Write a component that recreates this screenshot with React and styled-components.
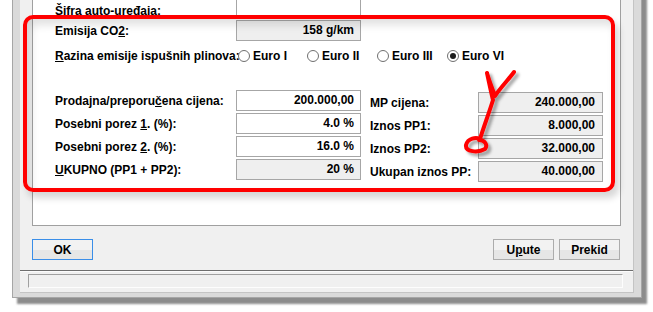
import React from "react";
import styled, { createGlobalStyle } from "styled-components";

const GlobalStyle = createGlobalStyle`
  html, body {
    margin: 0;
    padding: 0;
    background: #ffffff;
  }
  body {
    font-family: "Liberation Sans", Arial, sans-serif;
    font-size: 12px;
    font-weight: bold;
    color: #000;
  }
`;

const Page = styled.div`
  position: relative;
  width: 653px;
  height: 312px;
  overflow: hidden;
  background: #fff;
`;

const Window = styled.div`
  margin: -24px 0 0 12px;
  width: 630px;
  height: 322px;
  box-sizing: border-box;
  border: 1px solid #a6a6a6;
  border-top: none;
  background: #dadada;
  padding: 0 7px 4px 7px;
  box-shadow: 5px 6px 2px rgba(0, 0, 0, 0.45);
  display: flex;
`;

const Body = styled.div`
  flex: 1;
  display: flex;
  flex-direction: column;
  background: #f0f0f0;
  border-right: 1px solid #c4c4c4;
  border-bottom: 1px solid #c4c4c4;
`;

const Panel = styled.div`
  height: 250px;
  margin: 0 12px 0 12px;
  box-sizing: border-box;
  background: #fff;
  border: 1px solid #a0a0a0;
  border-top: none;
  padding: 21px 0 0 22px;
  display: flex;
  flex-direction: column;
`;

const Rows = styled.div`
  display: flex;
  flex-direction: column;
  gap: 2px;
`;

const Row = styled.div`
  display: grid;
  grid-template-columns: ${(p) => p.$label || 181}px 125px;
  align-items: ${(p) => p.$align || "center"};
  height: 21px;
`;

const Label = styled.div`
  white-space: nowrap;
  line-height: 14px;
`;

const U = styled.span`
  text-decoration: underline;
  text-underline-offset: 1px;
`;

const Field = styled.div`
  height: 21px;
  box-sizing: border-box;
  border: 1px solid #a6a6a6;
  background: ${(p) => (p.$readonly ? "#efefef" : "#ffffff")};
  text-align: right;
  padding-right: ${(p) => (p.$pad ? p.$pad : 6)}px;
  line-height: 19px;
  white-space: nowrap;
`;

const RadioRow = styled.div`
  display: grid;
  grid-template-columns: 183px auto;
  align-items: center;
  height: 21px;
  margin-top: 4px;
`;

const RadioGroup = styled.div`
  display: flex;
  align-items: center;
`;

const RadioItem = styled.div`
  display: flex;
  align-items: center;
  gap: 3px;
  width: ${(p) => p.$w}px;
`;

const Circle = styled.span`
  width: 12px;
  height: 12px;
  box-sizing: border-box;
  border-radius: 50%;
  border: 1px solid #6f6f6f;
  background: #fff;
  display: flex;
  align-items: center;
  justify-content: center;
  &::after {
    content: "";
    display: ${(p) => (p.$checked ? "block" : "none")};
    width: 6px;
    height: 6px;
    border-radius: 50%;
    background: #1b1b1b;
  }
`;

const Prices = styled.div`
  display: flex;
  margin-top: 24px;
`;

const Column = styled.div`
  display: flex;
  flex-direction: column;
  gap: 2px;
  margin-left: ${(p) => p.$offset || 0}px;
  padding-top: ${(p) => p.$top || 0}px;
`;

const ButtonBar = styled.div`
  display: flex;
  justify-content: space-between;
  margin: 13px 13px 0 12px;
  height: 21px;
`;

const ButtonGroup = styled.div`
  display: flex;
  gap: 5px;
`;

const Button = styled.div`
  width: 61px;
  height: 21px;
  box-sizing: border-box;
  border: 1px solid ${(p) => (p.$focused ? "#3a8ee8" : "#acacac")};
  background: linear-gradient(#f2f2f2 0 50%, #e6e6e6 50% 100%);
  display: flex;
  align-items: center;
  justify-content: center;
  font-size: 12px;
`;

const Separator = styled.div`
  margin-top: 10px;
  height: 1px;
  background: #6e6e6e;
  border-bottom: 1px solid #fbfbfb;
`;

const StatusField = styled.div`
  margin: 2px 10px 0 8px;
  height: 14px;
  box-sizing: border-box;
  border-top: 1px solid #a0a0a0;
  border-left: 1px solid #a0a0a0;
  border-right: 1px solid #fdfdfd;
  border-bottom: 1px solid #fdfdfd;
`;

const Highlight = styled.div`
  position: absolute;
  left: 23px;
  top: 15px;
  width: 592px;
  height: 177px;
  box-sizing: border-box;
  border: 4px solid #ff0000;
  border-radius: 10px;
  box-shadow: 4px 6px 7px rgba(0, 0, 0, 0.16),
    inset 4px 6px 8px rgba(0, 0, 0, 0.12);
  pointer-events: none;
`;

const Scribble = styled.svg`
  position: absolute;
  left: 0;
  top: 0;
  width: 653px;
  height: 312px;
  pointer-events: none;
`;

const leftRows = [
  { label: <>Prodajna/preporu<U>č</U>ena cijena:</>, value: "200.000,00" },
  { label: <>Posebni porez <U>1</U>. (%):</>, value: "4.0 %" },
  { label: <>Posebni porez <U>2</U>. (%):</>, value: "16.0 %" },
  { label: <><U>U</U>KUPNO (PP1 + PP2):</>, value: "20 %", readonly: true },
];

const rightRows = [
  { label: "MP cijena:", value: "240.000,00" },
  { label: "Iznos PP1:", value: "8.000,00" },
  { label: "Iznos PP2:", value: "32.000,00" },
  { label: "Ukupan iznos PP:", value: "40.000,00" },
];

const radios = [
  { text: "Euro I", w: 69 },
  { text: "Euro II", w: 70 },
  { text: "Euro III", w: 70 },
  { text: "Euro VI", w: 70, checked: true },
];

export default function App() {
  return (
    <>
      <GlobalStyle />
      <Page>
        <Window>
          <Body>
            <Panel>
              <Rows>
                <Row $align="end">
                  <Label>Šifra auto-uređaja:</Label>
                  <Field />
                </Row>
                <Row>
                  <Label>
                    Emisija CO<U>2</U>:
                  </Label>
                  <Field $readonly>158 g/km</Field>
                </Row>
              </Rows>
              <RadioRow>
                <Label>
                  <U>R</U>azina emisije ispušnih plinova:
                </Label>
                <RadioGroup>
                  {radios.map((r) => (
                    <RadioItem key={r.text} $w={r.w}>
                      <Circle $checked={r.checked} />
                      {r.text}
                    </RadioItem>
                  ))}
                </RadioGroup>
              </RadioRow>
              <Prices>
                <Column>
                  {leftRows.map((r, i) => (
                    <Row key={i}>
                      <Label>{r.label}</Label>
                      <Field $readonly={r.readonly}>{r.value}</Field>
                    </Row>
                  ))}
                </Column>
                <Column $offset={9} $top={2}>
                  {rightRows.map((r) => (
                    <Row key={r.label} $label={108}>
                      <Label>{r.label}</Label>
                      <Field $readonly $pad={7}>
                        {r.value}
                      </Field>
                    </Row>
                  ))}
                </Column>
              </Prices>
            </Panel>
            <ButtonBar>
              <Button $focused>OK</Button>
              <ButtonGroup>
                <Button>
                  U<U>p</U>ute
                </Button>
                <Button>Prekid</Button>
              </ButtonGroup>
            </ButtonBar>
            <Separator />
            <StatusField />
          </Body>
        </Window>
        <Highlight />
        <Scribble viewBox="0 0 653 312">
          <defs>
            <filter id="pen" x="-50%" y="-50%" width="200%" height="200%">
              <feDropShadow dx="3" dy="3" stdDeviation="1.6" floodColor="#000" floodOpacity="0.35" />
            </filter>
          </defs>
          <path
            d="M514 72 C509 79 500 88 495 96 C492 88 489 80 487 73 C489 82 491 92 493 100 C489 113 484 126 480 139 C476 137 468 138 466 145 C465 152 478 153 485 149 C488 145 485 140 479 140"
            fill="none"
            stroke="#ff0000"
            strokeWidth="4"
            strokeLinecap="round"
            strokeLinejoin="round"
            filter="url(#pen)"
          />
        </Scribble>
      </Page>
    </>
  );
}
